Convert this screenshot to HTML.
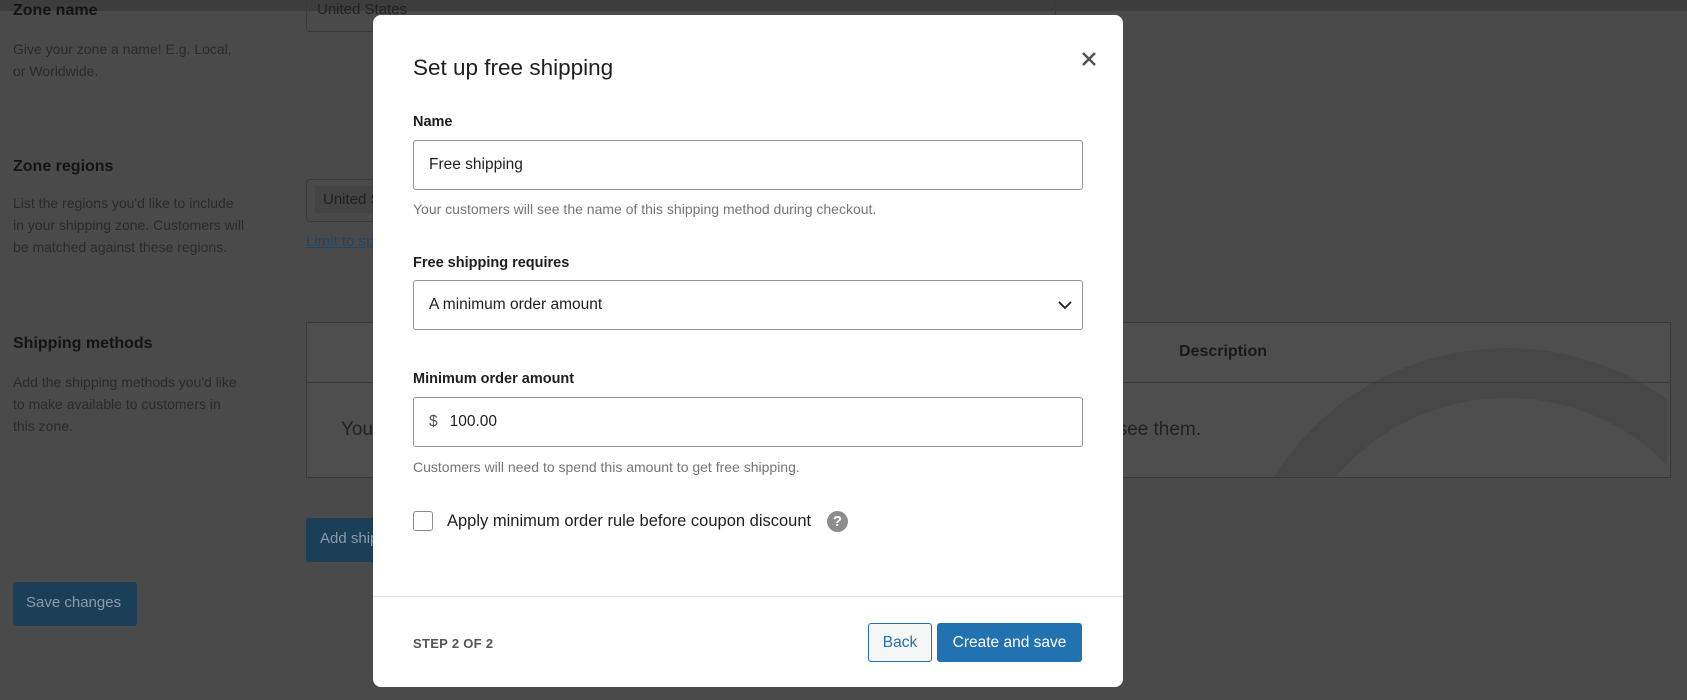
<!DOCTYPE html>
<html><head><meta charset="utf-8"><style>
*{box-sizing:border-box;margin:0;padding:0}
html,body{width:1687px;height:700px;overflow:hidden}
body{background:#4a4a4a;font-family:"Liberation Sans",sans-serif;position:relative;color:#1a1a1a}
.a{position:absolute}
.top{left:0;top:0;width:1687px;height:11px;background:#3d3d3d}
.h{font-size:16px;font-weight:bold;color:#141414}
.d{font-size:14px;color:#2a2a2a;line-height:22px}
.box{border:1px solid #3a3a3a;border-radius:4px}
.m{left:373px;top:15px;width:750px;height:672px;background:#fff;border-radius:8px}
.lab{position:absolute;left:40px;font-size:14.5px;font-weight:bold;color:#1e1e1e}
.inp{position:absolute;left:40px;width:670px;height:50px;border:1px solid #949494;border-radius:3px;font-size:15.5px;color:#1e1e1e;padding-left:15px;line-height:48px}
.help{position:absolute;left:40px;font-size:14px;color:#757575}
</style></head><body>
<div class="a top"></div>
<div class="a h" style="left:13px;top:2px">Zone name</div>
<div class="a d" style="left:13px;top:38px">Give your zone a name! E.g. Local,<br>or Worldwide.</div>
<div class="a box" style="left:306px;top:-2px;width:750px;height:34px"><span style="position:absolute;left:10px;top:2px;font-size:15px;color:#222">United States</span></div>
<div class="a h" style="left:13px;top:158px">Zone regions</div>
<div class="a d" style="left:13px;top:192px">List the regions you'd like to include<br>in your shipping zone. Customers will<br>be matched against these regions.</div>
<div class="a box" style="left:306px;top:179px;width:750px;height:43px"><span style="position:absolute;left:8px;top:6px;background:#444;padding:5px 8px;font-size:15px;color:#1e1e1e">United States</span></div>
<div class="a" style="left:306px;top:233px;font-size:15px;color:#1d4668;text-decoration:underline">Limit to specific ZIP/postcodes</div>
<div class="a h" style="left:13px;top:335px">Shipping methods</div>
<div class="a d" style="left:13px;top:371px">Add the shipping methods you'd like<br>to make available to customers in<br>this zone.</div>
<div class="a" style="left:306px;top:322px;width:1365px;height:156px;border:1px solid #3a3a3a;background:#4e4e4e;overflow:hidden">
<svg class="a" style="left:860px;top:0" width="500" height="156"><circle cx="340" cy="300" r="250" fill="none" stroke="#474747" stroke-width="50"/></svg>
<div class="a" style="left:0;top:0;width:100%;height:60px;border-bottom:1px solid #3a3a3a"></div>
<div class="a" style="left:866px;top:20px;width:100px;text-align:center;font-size:16px;font-weight:bold;color:#1a1a1a">Description</div>
<div class="a" style="left:34px;top:96px;font-size:19px;color:#222;white-space:nowrap">You can add multiple shipping methods within this zone. Only customers within the zone will see them.</div>
</div>
<div class="a" style="left:306px;top:518px;width:180px;height:44px;background:#1c3f58;border-radius:3px;font-size:15px;color:#8a9aa8;padding:12px 14px;white-space:nowrap;overflow:hidden">Add shipping method</div>
<div class="a" style="left:13px;top:582px;width:124px;height:44px;background:#1c3f58;border-radius:3px;font-size:15px;color:#8a9aa8;padding:12px 13px;white-space:nowrap">Save changes</div>

<div class="a m">
<div class="a" style="left:40px;top:40px;font-size:22.5px;color:#1e1e1e">Set up free shipping</div>
<svg class="a" style="left:709px;top:37px" width="14" height="14"><path d="M1 1L13 13M13 1L1 13" stroke="#555" stroke-width="2.6"/></svg>
<div class="lab" style="top:99px">Name</div>
<div class="inp" style="top:125px">Free shipping</div>
<div class="help" style="top:186px">Your customers will see the name of this shipping method during checkout.</div>
<div class="lab" style="top:240px">Free shipping requires</div>
<div class="inp" style="top:265px">A minimum order amount
<svg class="a" style="right:10px;top:19px" width="14" height="10"><path d="M1 2L7 8L13 2" fill="none" stroke="#1e1e1e" stroke-width="1.8"/></svg></div>
<div class="lab" style="top:356px">Minimum order amount</div>
<div class="inp" style="top:382px"><span style="color:#555;margin-right:12px">$</span>100.00</div>
<div class="help" style="top:444px">Customers will need to spend this amount to get free shipping.</div>
<div class="a" style="left:40px;top:496px;width:20px;height:20px;border:1px solid #8c8c8c;border-radius:3px"></div>
<div class="a" style="left:74px;top:497px;font-size:16.5px;color:#1e1e1e">Apply minimum order rule before coupon discount</div>
<div class="a" style="left:454px;top:496px;width:21px;height:21px;border-radius:50%;background:#8c8c8c;color:#fff;font-weight:bold;font-size:15px;text-align:center;line-height:21px">?</div>
<div class="a" style="left:0;top:581px;width:750px;height:1px;background:#e0e0e0"></div>
<div class="a" style="left:40px;top:621px;font-size:13px;color:#555;font-weight:bold;letter-spacing:.3px">STEP 2 OF 2</div>
<div class="a" style="left:495px;top:608px;width:64px;height:39px;border:1px solid #2271b1;border-radius:3px;background:#f6f7f7;color:#2271b1;font-size:15.5px;text-align:center;line-height:37px">Back</div>
<div class="a" style="left:564px;top:608px;width:145px;height:39px;border-radius:3px;background:#2271b1;color:#fff;font-size:15.5px;text-align:center;line-height:39px">Create and save</div>
</div>
</body></html>
